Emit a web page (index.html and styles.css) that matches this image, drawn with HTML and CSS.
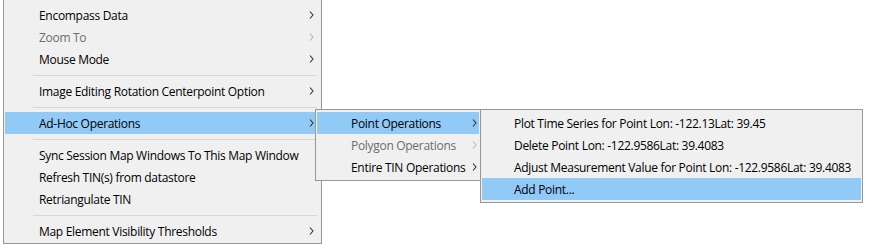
FILE: index.html
```html
<!DOCTYPE html>
<html lang="en">
<head>
    <meta charset="UTF-8">
    <title>Map context menu</title>
    <link rel="stylesheet" href="styles.css">
</head>
<body>

    <!-- Map window context menu -->
    <ul class="menu menu-main">
        <li class="item">Encompass Data<svg class="arrow" viewBox="0 0 5 8"><path d="M1 .5l3 3.5-3 3.5"/></svg></li>
        <li class="item disabled">Zoom To<svg class="arrow" viewBox="0 0 5 8"><path d="M1 .5l3 3.5-3 3.5"/></svg></li>
        <li class="item">Mouse Mode<svg class="arrow" viewBox="0 0 5 8"><path d="M1 .5l3 3.5-3 3.5"/></svg></li>
        <li class="sep"></li>
        <li class="item">Image Editing Rotation Centerpoint Option<svg class="arrow" viewBox="0 0 5 8"><path d="M1 .5l3 3.5-3 3.5"/></svg></li>
        <li class="sep"></li>
        <li class="item active">Ad-Hoc Operations<svg class="arrow" viewBox="0 0 5 8"><path d="M1 .5l3 3.5-3 3.5"/></svg>
            <ul class="menu sub sub-ops">
                <li class="item active">Point Operations<svg class="arrow" viewBox="0 0 5 8"><path d="M1 .5l3 3.5-3 3.5"/></svg>
                    <ul class="menu sub sub-point">
                        <li class="item">Plot Time Series for Point Lon: -122.13Lat: 39.45</li>
                        <li class="item">Delete Point Lon: -122.9586Lat: 39.4083</li>
                        <li class="item">Adjust Measurement Value for Point Lon: -122.9586Lat: 39.4083</li>
                        <li class="item active">Add Point...</li>
                    </ul>
                </li>
                <li class="item disabled">Polygon Operations<svg class="arrow" viewBox="0 0 5 8"><path d="M1 .5l3 3.5-3 3.5"/></svg></li>
                <li class="item">Entire TIN Operations<svg class="arrow" viewBox="0 0 5 8"><path d="M1 .5l3 3.5-3 3.5"/></svg></li>
            </ul>
        </li>
        <li class="sep"></li>
        <li class="item">Sync Session Map Windows To This Map Window</li>
        <li class="item">Refresh TIN(s) from datastore</li>
        <li class="item">Retriangulate TIN</li>
        <li class="sep"></li>
        <li class="item">Map Element Visibility Thresholds<svg class="arrow" viewBox="0 0 5 8"><path d="M1 .5l3 3.5-3 3.5"/></svg></li>
    </ul>

</body>
</html>
```

FILE: styles.css
```css
body { margin: 0; background: #fff; font-family: "Open Sans", "Noto Sans", sans-serif; font-size: 12px; letter-spacing: -0.3px; color: #000; }
ul { list-style: none; margin: 0; }
.menu { box-sizing: border-box; background: #f0f0f0; border: 1px solid #979797; padding: 2px 1px; }
.menu-main { width: 319px; margin-left: 3px; border-top: 0; padding: 4px 1px 1px; }
.item { position: relative; display: flex; align-items: center; height: 22px; padding: 0 6px 0 34px; white-space: nowrap; }
.item.active { background: #91c9f7; }
.item.disabled { color: #6d6d6d; }
.arrow { width: 5px; height: 8px; margin-left: auto; fill: none; stroke: #333; stroke-width: 1.1; }
.disabled .arrow { stroke: #b5b5b5; }
.sep { height: 10px; margin: 0 3px 0 28px; background: linear-gradient(#d7d7d7, #d7d7d7) center / 100% 1px no-repeat; }
.sub { position: absolute; top: -3px; z-index: 1; }
.sub-ops { left: 310px; width: 166px; }
.sub-ops > .item { padding-right: 2px; }
.sub-point { left: 163px; width: 383px; }
.sub-point > .item { padding-left: 32px; }
```
